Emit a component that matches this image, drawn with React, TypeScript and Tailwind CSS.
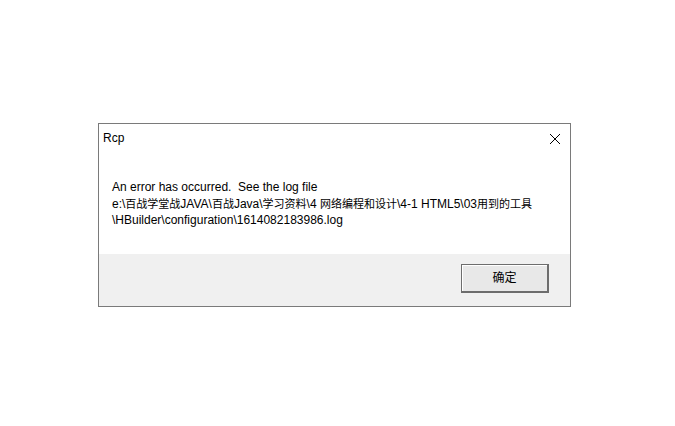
function Cjk({ children }: { children: string }) {
  return <span className="text-[11px]">{children}</span>;
}

export default function App() {
  return (
    <div
      className="w-[675px] h-[426px] bg-white pt-[123px] pl-[98px]"
      style={{ fontFamily: '"Liberation Sans", "Noto Sans CJK SC", sans-serif' }}
    >
      <div className="w-[473px] h-[184px] border border-[#7a7a7a] bg-white flex flex-col">
        {/* title bar */}
        <div className="h-[28px] flex items-center justify-between pl-[4px] pr-[9px]">
          <span className="text-[12px] text-black leading-none">Rcp</span>
          <svg width="12" height="12" viewBox="0 0 12 12" className="mt-[2px]">
            <path d="M1 1 L11 11 M11 1 L1 11" stroke="#000" strokeWidth="1" fill="none" />
          </svg>
        </div>

        {/* message */}
        <div className="flex-1 pt-[27px] pl-[13px] text-[12px] leading-[16.5px] text-black">
          <p>An error has occurred.&nbsp; See the log file</p>
          <p>
            e:\<Cjk>百战学堂战</Cjk>JAVA\<Cjk>百战</Cjk>Java\<Cjk>学习资料</Cjk>\4 <Cjk>网络编程和设计</Cjk>\4-1 HTML5\03<Cjk>用到的工具</Cjk>
          </p>
          <p>\HBuilder\configuration\1614082183986.log</p>
        </div>

        {/* footer */}
        <div className="h-[52px] bg-[#f0f0f0] flex items-start justify-end pt-[10px] pr-[21px]">
          <button className="w-[88px] h-[29px] border border-[#6d6d6d] border-r-2 border-b-2 bg-[#e8e8e8] flex items-center justify-center text-[12px] text-black shadow-[inset_1px_1px_0_#ffffff]">
            确定
          </button>
        </div>
      </div>
    </div>
  );
}
